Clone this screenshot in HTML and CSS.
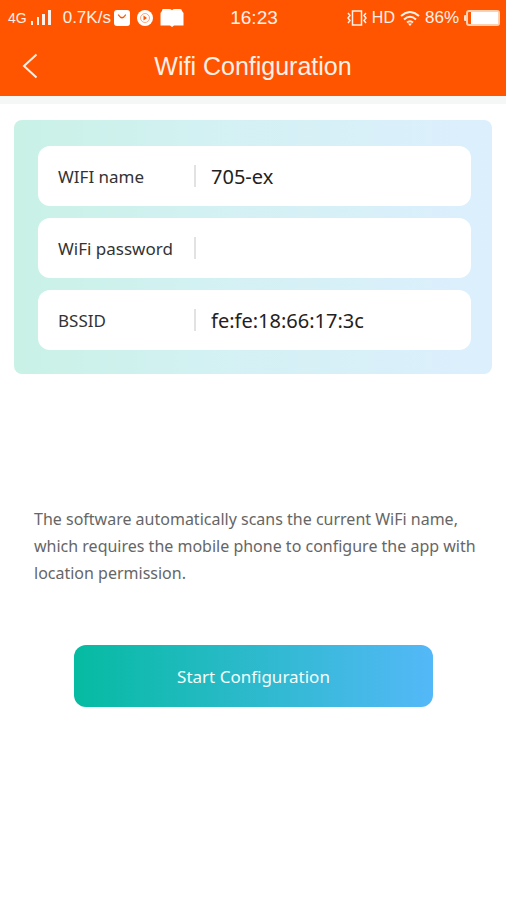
FILE: index.html
```html
<!DOCTYPE html>
<html lang="en">
<head>
  <meta charset="UTF-8">
  <meta name="viewport" content="width=device-width, initial-scale=1.0">
  <title>Wifi Configuration</title>
  <link rel="stylesheet" href="styles.css">
</head>
<body>
  <header class="header">
    <div class="status-bar">
      <div class="status-left">
        <span class="network">4G</span>
        <svg class="signal" width="22" height="16" viewBox="0 0 22 16" fill="currentColor">
          <rect x="1" y="11" width="2" height="4"/>
          <rect x="7" y="7" width="2" height="8"/>
          <rect x="12" y="4" width="3" height="11"/>
          <rect x="18" y="0" width="3" height="15"/>
        </svg>
        <span class="speed">0.7K/s</span>
        <svg width="16" height="16" viewBox="0 0 16 16">
          <rect width="16" height="16" rx="3" fill="#fff"/>
          <path d="M4.5 5 Q8 10.5 11.5 5" fill="none" stroke="#ff5500" stroke-width="1.3" stroke-linecap="round"/>
        </svg>
        <svg class="play" width="16" height="16" viewBox="0 0 16 16">
          <circle cx="8" cy="8" r="8" fill="#fff"/>
          <circle cx="8" cy="8" r="4.5" fill="none" stroke="#ff5500" stroke-width="1" stroke-opacity=".5"/>
          <path d="M6.5 5.5 L10 8 L6.5 10.500 Z" fill="#ff5500"/>
        </svg>
        <svg width="24" height="18" viewBox="0 0 24 18">
          <path d="M3 0 H9 Q11 0 12 1.3 Q13 0 15 0 H20 Q22 0 22 2 L23.5 4 V16.500 H14 L12 18 L10 16.500 H0.500 V4 L2 2 Q2 0 3 0 Z" fill="#fff"/>
        </svg>
      </div>
      <div class="clock">16:23</div>
      <div class="status-right">
        <svg width="20" height="16" viewBox="0 0 20 16" fill="none" stroke="currentColor" stroke-width="1.5">
          <rect x="5.500" y="1" width="9" height="14"/>
          <path d="M1 3 L3 5.500 L1 8 L3 10.500 L1 13 M19 3 L17 5.500 L19 8 L17 10.500 L19 13"/>
        </svg>
        <span class="hd">HD</span>
        <svg width="20" height="15" viewBox="0 0 20 15" fill="none" stroke="currentColor" stroke-width="2">
          <path d="M1 5 Q10 -3 19 5"/>
          <path d="M4 8.500 Q10 3 16 8.500"/>
          <path d="M7 11.500 Q10 9 13 11.500"/>
          <path d="M8 12.500 H12 L10 15 Z" fill="currentColor" stroke="none"/>
        </svg>
        <span class="percent">86%</span>
        <svg width="36" height="16" viewBox="0 0 36 16">
          <rect x="0" y="5" width="3" height="6" rx="1" fill="#ffe0cc"/>
          <rect x="3" y="1" width="32" height="14" rx="2" fill="none" stroke="#ffd0b0" stroke-width="2"/>
          <rect x="7" y="2" width="27" height="12" fill="#fff"/>
        </svg>
      </div>
    </div>
    <nav class="title-bar">
      <button class="back" type="button" aria-label="Back">
        <svg width="16" height="26" viewBox="0 0 16 26" fill="none" stroke="currentColor" stroke-width="2">
          <path d="M14.500 1.500 L2 13 L14.500 24.500"/>
        </svg>
      </button>
      <h1 class="title">Wifi Configuration</h1>
    </nav>
  </header>

  <main class="content">
    <form class="config-form">
      <div class="card">
        <div class="field">
          <label for="wifiName">WIFI name</label>
          <input type="text" id="wifiName" value="705-ex">
        </div>
        <div class="field">
          <label for="wifiPassword">WiFi password</label>
          <input type="password" id="wifiPassword">
        </div>
        <div class="field">
          <label for="bssid">BSSID</label>
          <input type="text" id="bssid" value="fe:fe:18:66:17:3c">
        </div>
      </div>
      <p class="hint">The software automatically scans the current WiFi name, which requires the mobile phone to configure the app with location permission.</p>
      <button class="start-btn" type="button">Start Configuration</button>
    </form>
  </main>
</body>
</html>
```

FILE: styles.css
```css
* { box-sizing: border-box; margin: 0; padding: 0; }
body {
  font-family: 'Noto Sans', 'Open Sans', sans-serif;
  background: #fff;
  min-height: 100vh;
}
svg { display: block; flex-shrink: 0; }
.header {
  background: #ff5500;
  color: #fff0e8;
  font-family: 'Liberation Sans', Arial, sans-serif;
}
.status-bar {
  display: grid;
  grid-template-columns: 1fr auto 1fr;
  align-items: center;
  height: 36px;
  padding: 0 6px 0 8px;
}
.status-left, .status-right {
  display: flex;
  align-items: center;
}
.status-left { gap: 7px; }
.status-right {
  justify-content: flex-end;
  gap: 5px;
}
.network {
  font-size: 14px;
  margin-right: -4px;
}
.speed, .hd, .percent { font-size: 17px; }
.speed { margin: 0 -4px 0 4px; }
.hd { font-size: 16px; }
.clock { font-size: 19px; }
.title-bar {
  display: grid;
  grid-template-columns: 60px 1fr 60px;
  align-items: center;
  height: 60px;
}
.back {
  display: flex;
  align-items: center;
  height: 60px;
  padding-left: 22px;
  border: none;
  background: none;
  color: inherit;
  cursor: pointer;
}
.title {
  font-size: 25px;
  font-weight: normal;
  text-align: center;
}
.content { border-top: 8px solid #f4f7f6; }
.config-form {
  display: flex;
  flex-direction: column;
  padding: 16px 14px;
}
.card {
  display: flex;
  flex-direction: column;
  gap: 12px;
  padding: 26px 21px 24px 24px;
  border-radius: 8px;
  background: linear-gradient(to right, #c9f1e6, #d3f1f3 40%, #dceffd);
}
.field {
  display: flex;
  align-items: center;
  height: 60px;
  padding: 0 20px;
  border-radius: 12px;
  background: #fff;
}
.field label {
  width: 136px;
  flex-shrink: 0;
  font-size: 17px;
  color: #333;
}
.field input {
  flex: 1;
  min-width: 0;
  height: 22px;
  padding-left: 15px;
  border: none;
  border-left: 2px solid #e2e2e2;
  outline: none;
  background: none;
  font-family: inherit;
  font-size: 20px;
  color: #222;
}
.hint {
  margin: 132px 0 58px;
  padding: 0 10px 0 20px;
  font-size: 16px;
  line-height: 27px;
  color: #666;
}
.start-btn {
  height: 62px;
  margin: 0 59px 0 60px;
  border: none;
  border-radius: 12px;
  background: linear-gradient(to right, #05bba1, #54b8f8);
  color: #f2fffc;
  font-family: inherit;
  font-size: 17px;
  cursor: pointer;
}
```
